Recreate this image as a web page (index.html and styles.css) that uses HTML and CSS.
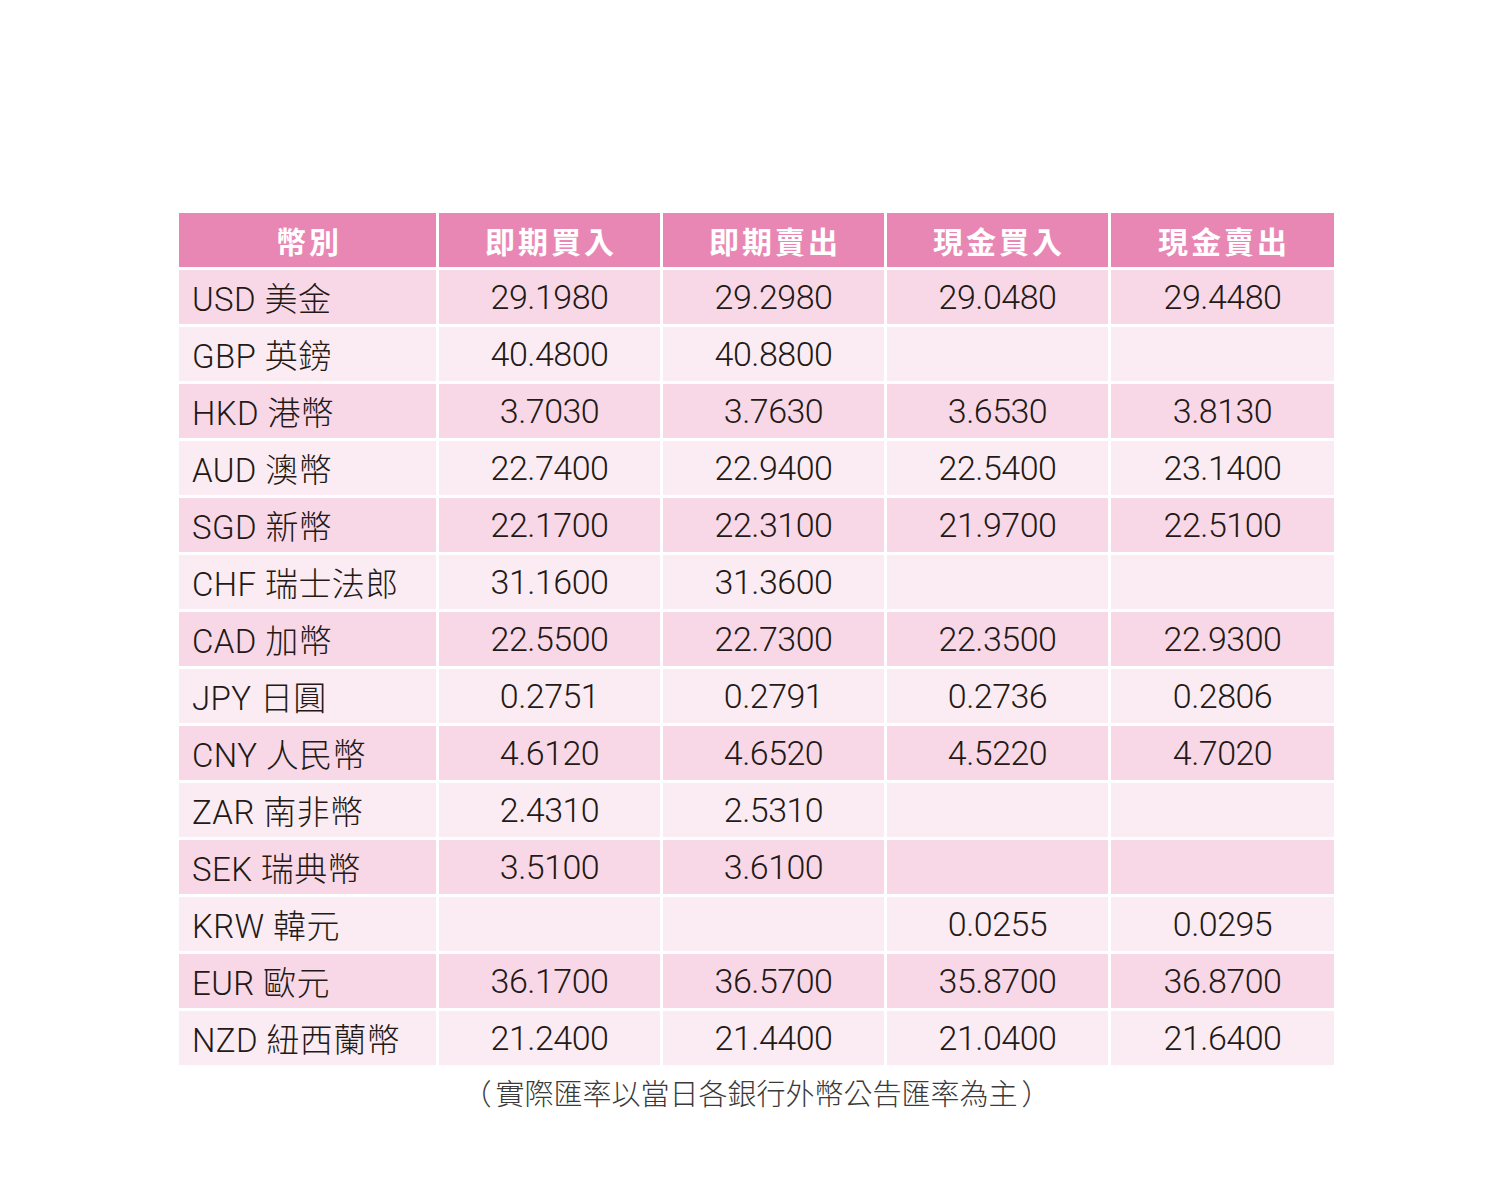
FILE: index.html
```html
<!DOCTYPE html>
<html lang="zh-Hant">
<head>
<meta charset="utf-8">
<title>匯率表</title>
<link rel="stylesheet" href="styles.css">
</head>
<body>
<main class="page">
  <div class="rates">
    <div class="cell head">幣別</div>
    <div class="cell head">即期買入</div>
    <div class="cell head">即期賣出</div>
    <div class="cell head">現金買入</div>
    <div class="cell head">現金賣出</div>

    <div class="cell name dark">USD 美金</div><div class="cell num dark">29.1980</div><div class="cell num dark">29.2980</div><div class="cell num dark">29.0480</div><div class="cell num dark">29.4480</div>
    <div class="cell name light">GBP 英鎊</div><div class="cell num light">40.4800</div><div class="cell num light">40.8800</div><div class="cell num light"></div><div class="cell num light"></div>
    <div class="cell name dark">HKD 港幣</div><div class="cell num dark">3.7030</div><div class="cell num dark">3.7630</div><div class="cell num dark">3.6530</div><div class="cell num dark">3.8130</div>
    <div class="cell name light">AUD 澳幣</div><div class="cell num light">22.7400</div><div class="cell num light">22.9400</div><div class="cell num light">22.5400</div><div class="cell num light">23.1400</div>
    <div class="cell name dark">SGD 新幣</div><div class="cell num dark">22.1700</div><div class="cell num dark">22.3100</div><div class="cell num dark">21.9700</div><div class="cell num dark">22.5100</div>
    <div class="cell name light">CHF 瑞士法郎</div><div class="cell num light">31.1600</div><div class="cell num light">31.3600</div><div class="cell num light"></div><div class="cell num light"></div>
    <div class="cell name dark">CAD 加幣</div><div class="cell num dark">22.5500</div><div class="cell num dark">22.7300</div><div class="cell num dark">22.3500</div><div class="cell num dark">22.9300</div>
    <div class="cell name light">JPY 日圓</div><div class="cell num light">0.2751</div><div class="cell num light">0.2791</div><div class="cell num light">0.2736</div><div class="cell num light">0.2806</div>
    <div class="cell name dark">CNY 人民幣</div><div class="cell num dark">4.6120</div><div class="cell num dark">4.6520</div><div class="cell num dark">4.5220</div><div class="cell num dark">4.7020</div>
    <div class="cell name light">ZAR 南非幣</div><div class="cell num light">2.4310</div><div class="cell num light">2.5310</div><div class="cell num light"></div><div class="cell num light"></div>
    <div class="cell name dark">SEK 瑞典幣</div><div class="cell num dark">3.5100</div><div class="cell num dark">3.6100</div><div class="cell num dark"></div><div class="cell num dark"></div>
    <div class="cell name light">KRW 韓元</div><div class="cell num light"></div><div class="cell num light"></div><div class="cell num light">0.0255</div><div class="cell num light">0.0295</div>
    <div class="cell name dark">EUR 歐元</div><div class="cell num dark">36.1700</div><div class="cell num dark">36.5700</div><div class="cell num dark">35.8700</div><div class="cell num dark">36.8700</div>
    <div class="cell name light">NZD 紐西蘭幣</div><div class="cell num light">21.2400</div><div class="cell num light">21.4400</div><div class="cell num light">21.0400</div><div class="cell num light">21.6400</div>
  </div>
  <p class="note"><span class="paren">（</span>實際匯率以當日各銀行外幣公告匯率為主<span class="paren">）</span></p>
</main>
</body>
</html>
```

FILE: styles.css
```css
html, body {
  margin: 0;
  padding: 0;
  background: #ffffff;
}
.page {
  width: 1500px;
  padding-top: 213px;
}
.rates {
  margin-left: 179px;
  width: 1155px;
  display: grid;
  grid-template-columns: 257px 221px 221px 221px 223px;
  grid-auto-rows: 54px;
  column-gap: 3px;
  row-gap: 3px;
}
.cell {
  display: flex;
  align-items: center;
  justify-content: center;
  color: #231916;
  font-family: "Roboto", "Noto Sans CJK TC", sans-serif;
  font-weight: 300;
  font-size: 34px;
  letter-spacing: -0.5px;
  padding-top: 0;
  box-sizing: border-box;
}
.head {
  background: #e987b4;
  color: #ffffff;
  font-family: "Noto Sans CJK TC", sans-serif;
  font-weight: 700;
  font-size: 30px;
  letter-spacing: 3px;
  padding-left: 3px;
  padding-top: 0;
}
.dark { background: #f8d8e7; }
.light { background: #fbecf3; }
.name {
  justify-content: flex-start;
  padding-left: 13px;
  font-size: 33px;
  letter-spacing: 0.4px;
}
.note {
  margin: 7px 0 0 0;
  text-align: center;
  width: 1513px;
  font-family: "Noto Sans CJK TC", sans-serif;
  font-weight: 300;
  font-size: 29px;
  line-height: 40px;
  color: #3a3a3a;
}
.paren {
  display: inline-block;
  margin: 0 4px;
}
```
